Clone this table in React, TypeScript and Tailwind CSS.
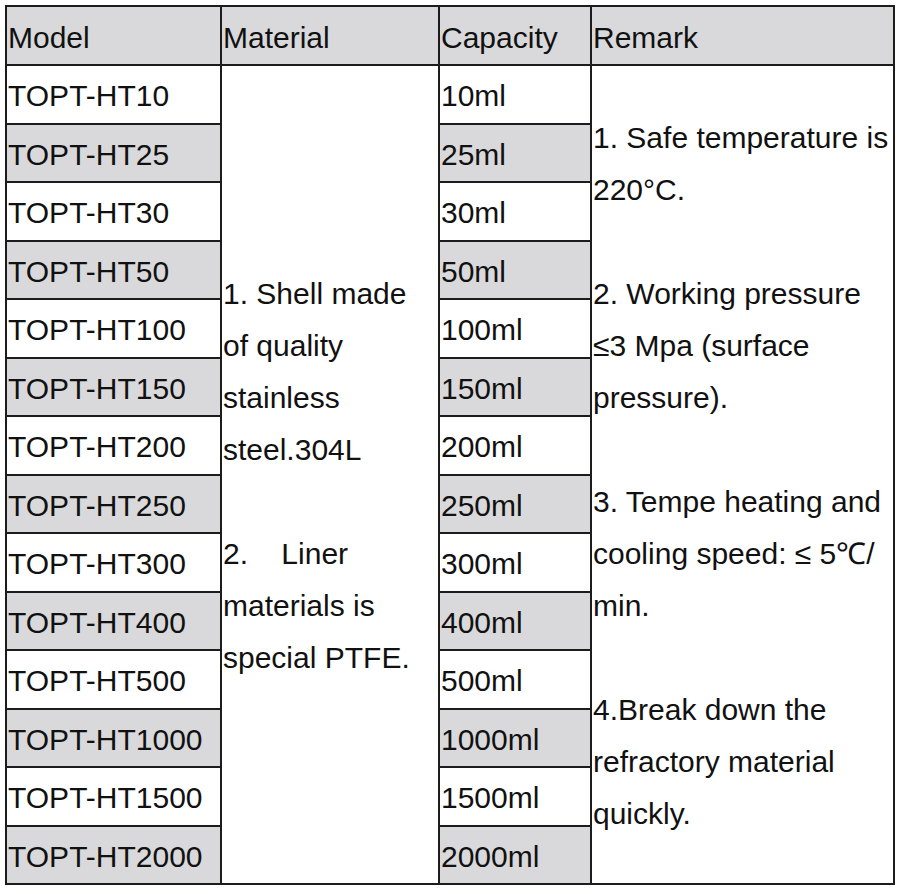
const models = [
  'TOPT-HT10',
  'TOPT-HT25',
  'TOPT-HT30',
  'TOPT-HT50',
  'TOPT-HT100',
  'TOPT-HT150',
  'TOPT-HT200',
  'TOPT-HT250',
  'TOPT-HT300',
  'TOPT-HT400',
  'TOPT-HT500',
  'TOPT-HT1000',
  'TOPT-HT1500',
  'TOPT-HT2000',
];

const capacities = ['10ml', '25ml', '30ml', '50ml', '100ml', '150ml', '200ml', '250ml', '300ml', '400ml', '500ml', '1000ml', '1500ml', '2000ml'];

const materialLines = ['1. Shell made', 'of quality', 'stainless', 'steel.304L', '', '2.    Liner', 'materials is', 'special PTFE.'];

const remarkLines = [
  '1. Safe temperature is',
  '220°C.',
  '',
  '2. Working pressure',
  '≤3 Mpa (surface',
  'pressure).',
  '',
  '3. Tempe heating and',
  'cooling speed: ≤ 5℃/',
  'min.',
  '',
  '4.Break down the',
  'refractory material',
  'quickly.',
];

const cell = 'border-2 border-[#1c1c1c] pl-[1px] pr-0 align-middle overflow-visible';
const gray = 'bg-[#d9d9db]';

const Lines = ({ lines }: { lines: string[] }) => (
  <div className="flex flex-col pt-[3px]">
    {lines.map((l, i) => (
      <div key={i} className="h-[52px] leading-[52px] whitespace-pre">
        {l}
      </div>
    ))}
  </div>
);

export default function App() {
  return (
    <div className="min-h-[894px] bg-white pl-[5px] pt-[5px] text-[#111] font-['Liberation_Sans',Arial,sans-serif] text-[30px]">
      <table className="table-fixed border-collapse w-[888px]">
        <colgroup>
          <col className="w-[215px]" />
          <col className="w-[218px]" />
          <col className="w-[152px]" />
          <col className="w-[303px]" />
        </colgroup>
        <thead>
          <tr className="h-[59px]">
            <th className={`${cell} ${gray} text-left font-normal pt-[3px]`}>Model</th>
            <th className={`${cell} ${gray} text-left font-normal pt-[3px]`}>Material</th>
            <th className={`${cell} ${gray} text-left font-normal pt-[3px]`}>Capacity</th>
            <th className={`${cell} ${gray} text-left font-normal pt-[3px]`}>Remark</th>
          </tr>
        </thead>
        <tbody>
          {models.map((m, i) => (
            <tr key={m} className="h-[58.5px]">
              <td className={`${cell} pt-[3px] ${i % 2 === 1 ? gray : ''}`}>{m}</td>
              {i === 0 && (
                <td rowSpan={14} className={cell}>
                  <Lines lines={materialLines} />
                </td>
              )}
              <td className={`${cell} pt-[3px] ${i % 2 === 1 ? gray : ''}`}>{capacities[i]}</td>
              {i === 0 && (
                <td rowSpan={14} className={cell}>
                  <Lines lines={remarkLines} />
                </td>
              )}
            </tr>
          ))}
        </tbody>
      </table>
    </div>
  );
}
